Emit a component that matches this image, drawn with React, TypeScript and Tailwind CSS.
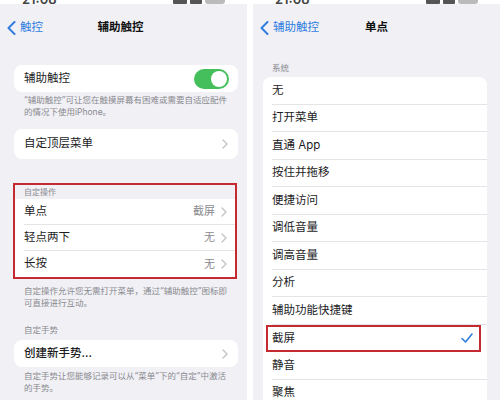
const font = { fontFamily: 'Inter, "Noto Sans CJK SC", sans-serif' };

function Chevron() {
  return (
    <svg width="6" height="10" viewBox="0 0 6 10" className="shrink-0">
      <polyline points="1,1 5,5 1,9" fill="none" stroke="#c4c4c8" strokeWidth="1.4" strokeLinecap="round" strokeLinejoin="round" />
    </svg>
  );
}

function BackChevron() {
  return (
    <svg width="9" height="14" viewBox="0 0 9 14" className="shrink-0">
      <polyline points="7.5,1 1.5,7 7.5,13" fill="none" stroke="#2f7de1" strokeWidth="2" strokeLinecap="round" strokeLinejoin="round" />
    </svg>
  );
}

// only the bottom edge of the status bar is visible in the shot
function StatusStub({ left }: { left: string }) {
  return (
    <div className="h-[4px] bg-white overflow-hidden">
      <div className="flex justify-between items-start px-[22px] -mt-[10px] text-[13px] font-semibold text-[#444]">
        <span>{left}</span>
        <span className="flex gap-[3px] items-end pt-[4px]">
          <span className="w-[14px] h-[10px] bg-[#555] rounded-[1px]" />
          <span className="w-[12px] h-[10px] bg-[#555] rounded-[1px]" />
          <span className="w-[20px] h-[10px] bg-[#bbb] rounded-[3px]" />
        </span>
      </div>
    </div>
  );
}

function Nav({ back, title }: { back: string; title: string }) {
  return (
    <div className="h-[48px] flex items-center relative">
      <div className="flex items-center gap-[4px] pl-[7px] text-[11.5px] text-[#2f7de1]">
        <BackChevron />
        <span>{back}</span>
      </div>
      <div className="absolute left-0 right-0 text-center text-[11.5px] font-semibold text-[#111] pointer-events-none">
        {title}
      </div>
    </div>
  );
}

function LeftPanel() {
  return (
    <div className="w-[247px] shrink-0 bg-[#f0f0f5] flex flex-col overflow-hidden *:shrink-0">
      <StatusStub left="21:08" />
      <div className="pr-[6px]">
        <Nav back="触控" title="辅助触控" />
      </div>

      <div className="mt-[13px] ml-[14px] w-[224px] h-[27px] bg-white rounded-[8px] flex items-center justify-between pl-[10px] pr-[9px]">
        <span className="text-[11.5px] text-[#1c1c1e]">辅助触控</span>
        <div className="w-[35px] h-[20px] rounded-full bg-[#45be5c] flex items-center justify-end pr-[2px]">
          <div className="w-[16px] h-[16px] rounded-full bg-white" />
        </div>
      </div>
      <div className="mt-[2px] ml-[24px] w-[210px] text-[8.5px] leading-[12px] text-[#8a8a8f]">
        “辅助触控”可让您在触摸屏幕有困难或需要自适应配件的情况下使用iPhone。
      </div>

      <div className="mt-[11px] ml-[14px] w-[224px] h-[30px] bg-white rounded-[8px] flex items-center justify-between pl-[10px] pr-[10px]">
        <span className="text-[11.5px] text-[#1c1c1e]">自定顶层菜单</span>
        <Chevron />
      </div>

      <div className="mt-[24px] ml-[13px] w-[224px] border-2 border-[#c42a30] flex flex-col">
        <div className="h-[14px] flex items-center pl-[9px] text-[8px] text-[#8a8a8f]">自定操作</div>
        <div className="bg-white flex flex-col">
          {[
            ['单点', '截屏'],
            ['轻点两下', '无'],
            ['长按', '无'],
          ].map(([a, b], i) => (
            <div key={a} className="h-[26px] flex items-center pl-[9px]">
              <div className={`flex-1 h-full flex items-center justify-between pr-[8px] ${i < 2 ? 'border-b border-[#e4e4e8]' : ''}`}>
                <span className="text-[11.5px] text-[#1c1c1e]">{a}</span>
                <span className="flex items-center gap-[6px] text-[11px] text-[#8a8a8f]">
                  {b}
                  <Chevron />
                </span>
              </div>
            </div>
          ))}
        </div>
      </div>
      <div className="mt-[7px] ml-[24px] w-[210px] text-[8.5px] leading-[11.5px] text-[#8a8a8f]">
        自定操作允许您无需打开菜单，通过“辅助触控”图标即可直接进行互动。
      </div>

      <div className="mt-[15px] ml-[24px] text-[8.5px] leading-[12px] text-[#8a8a8f]">自定手势</div>
      <div className="mt-[4px] ml-[14px] w-[224px] h-[27px] bg-white rounded-[8px] flex items-center justify-between pl-[10px] pr-[10px]">
        <span className="text-[11.5px] font-medium text-[#1c1c1e]">创建新手势…</span>
        <Chevron />
      </div>
      <div className="mt-[4px] ml-[24px] w-[210px] text-[8.5px] leading-[11.5px] text-[#8a8a8f]">
        自定手势让您能够记录可以从“菜单”下的“自定”中激活的手势。
      </div>
    </div>
  );
}

const options = [
  '无',
  '打开菜单',
  '直通 App',
  '按住并拖移',
  '便捷访问',
  '调低音量',
  '调高音量',
  '分析',
  '辅助功能快捷键',
  '截屏',
  '静音',
  '聚焦',
];

function RightPanel() {
  return (
    <div className="w-[247px] shrink-0 bg-[#f0f0f5] flex flex-col overflow-hidden *:shrink-0">
      <StatusStub left="21:08" />
      <Nav back="辅助触控" title="单点" />
      <div className="mt-[10px] h-[12px] ml-[19px] text-[8.5px] leading-[12px] text-[#8a8a8f]">系统</div>
      <div className="mt-[3px] ml-[10px] w-[224px] bg-white rounded-t-[8px] flex flex-col *:shrink-0">
        {options.map((o) => (
          <div key={o} className="h-[27.5px] flex items-stretch">
            {o === '截屏' ? (
              <div className="flex-1 ml-[3px] mr-[6px] border-2 border-[#c42a30] flex items-center justify-between pl-[4px] pr-[6px]">
                <span className="text-[11.5px] text-[#1c1c1e]">{o}</span>
                <svg width="12" height="10" viewBox="0 0 12 10">
                  <polyline points="1,5.5 4.5,9 11,1" fill="none" stroke="#2f7de1" strokeWidth="1.6" strokeLinecap="round" strokeLinejoin="round" />
                </svg>
              </div>
            ) : (
              <div className="flex-1 ml-[9px] flex items-center border-b border-[#e4e4e8]">
                <span className="text-[11.5px] text-[#1c1c1e]">{o}</span>
              </div>
            )}
          </div>
        ))}
      </div>
    </div>
  );
}

export default function App() {
  return (
    <div className="w-[500px] h-[400px] bg-white flex gap-[6px] overflow-hidden" style={font}>
      <LeftPanel />
      <RightPanel />
    </div>
  );
}
